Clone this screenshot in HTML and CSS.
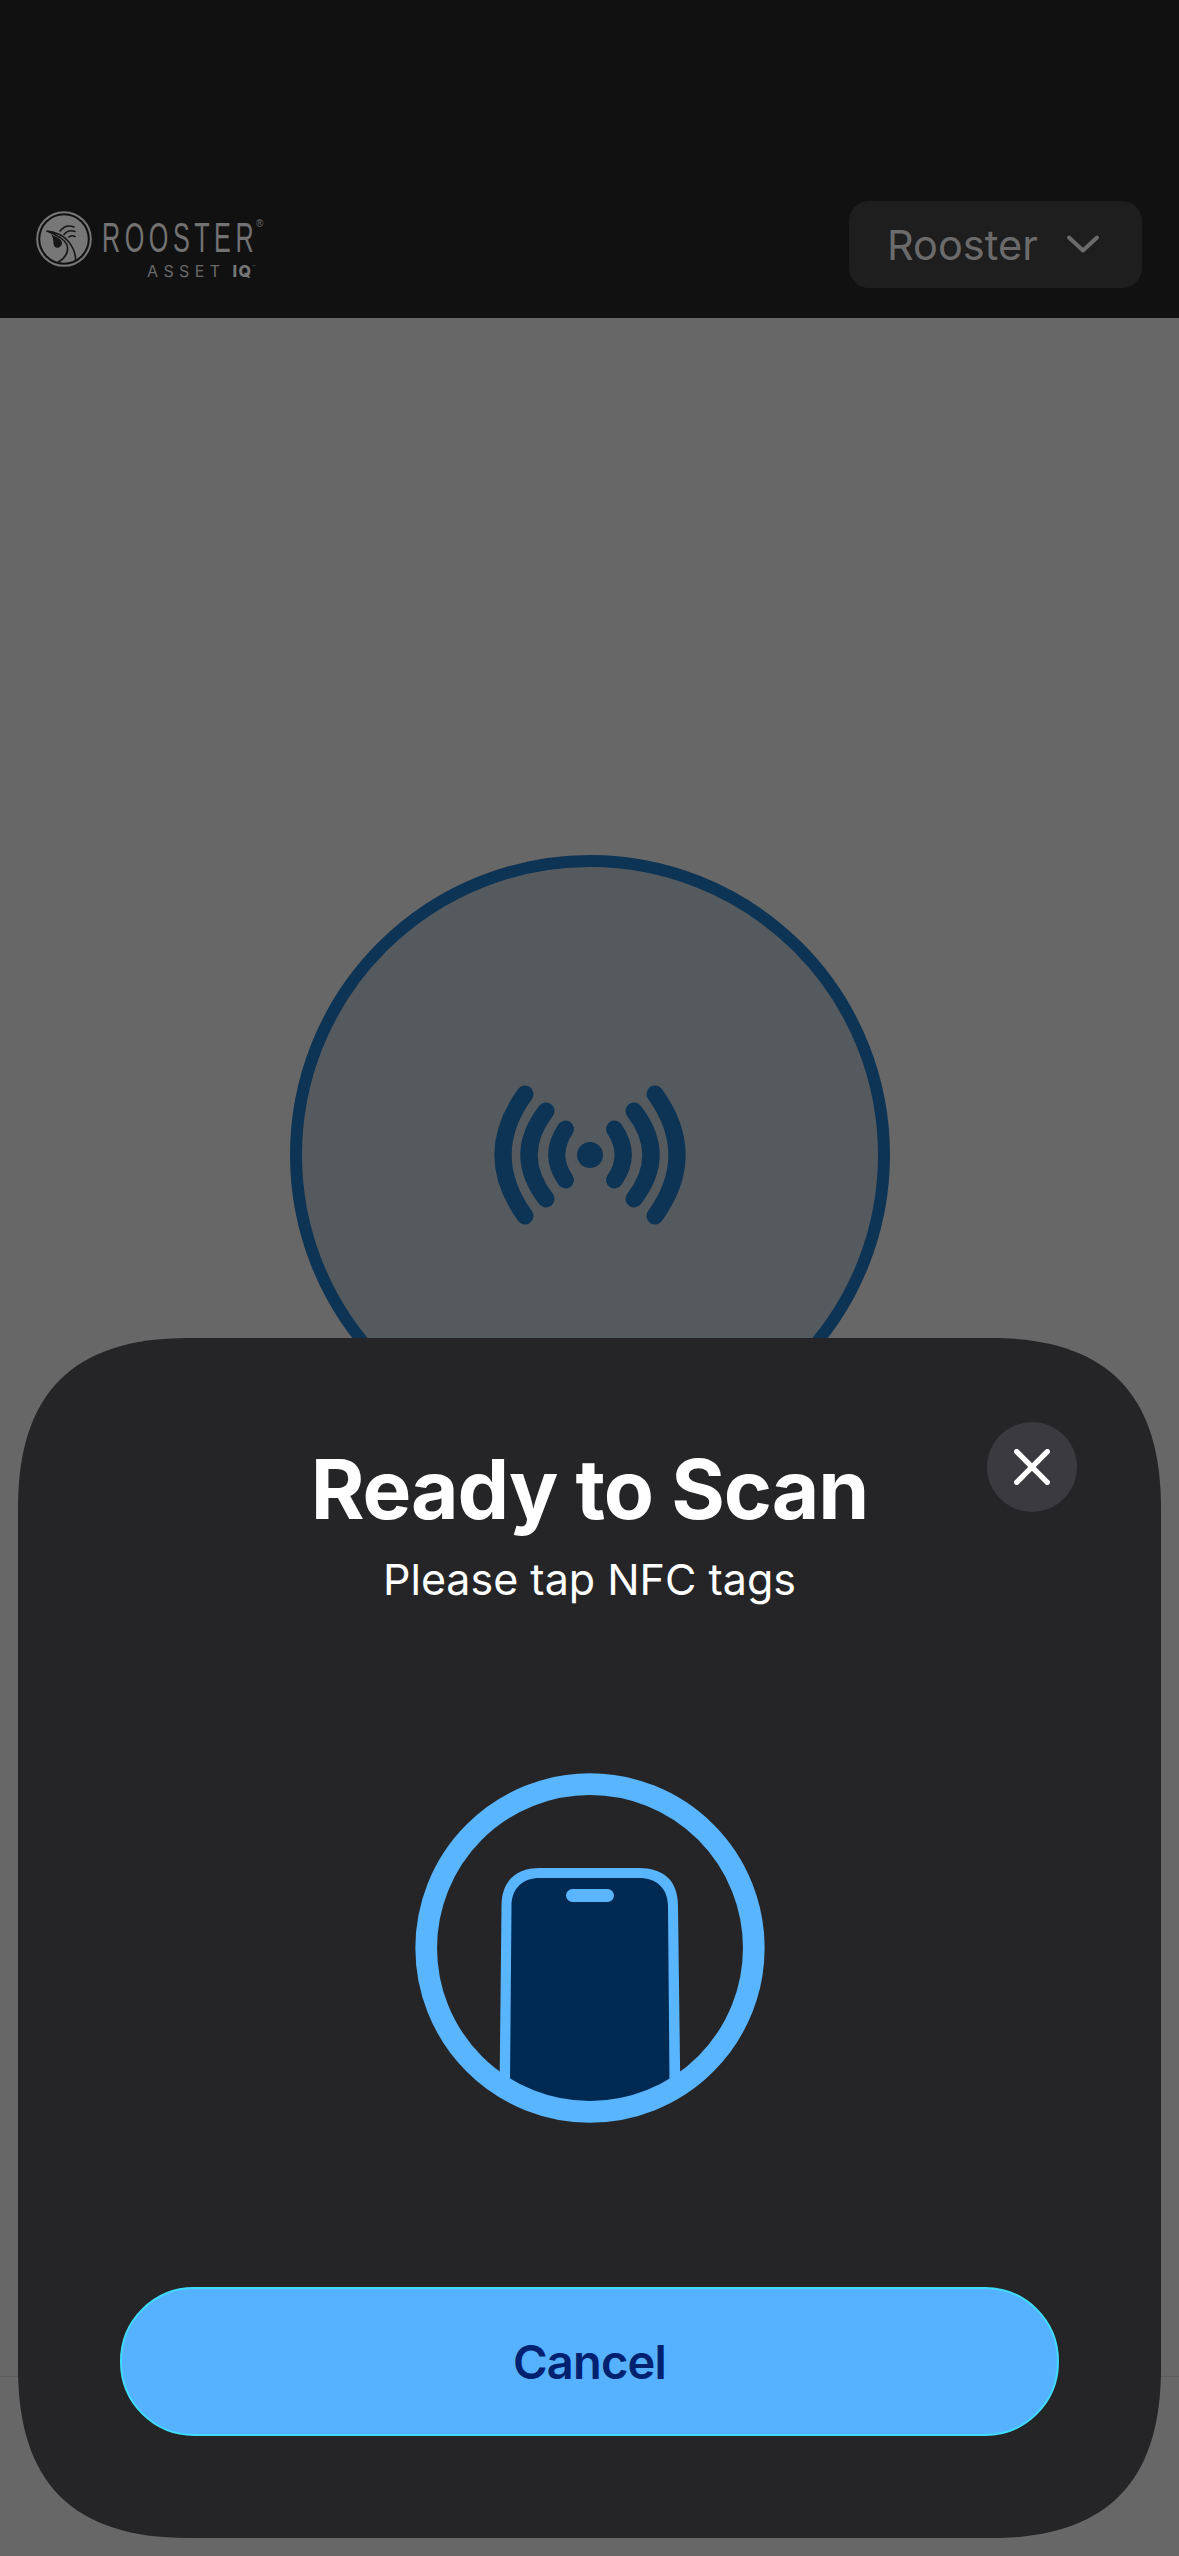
FILE: index.html
```html
<!DOCTYPE html>
<html lang="en">
<head>
<meta charset="utf-8">
<title>Ready to Scan</title>
<link rel="stylesheet" href="styles.css">
</head>
<body>
<div class="page">
  <header class="topbar">
    <div class="brand">
      <svg class="brand-mark" viewBox="0 0 58 58" aria-hidden="true">
        <circle class="mark-ring" cx="29" cy="29" r="26.800"/>
        <circle class="mark-disc" cx="29" cy="29" r="23.800"/>
        <path class="mark-bird" d="M12 21 C20 22 28 25 33 31 C38 37 41 43 40.500 51 M23.500 52 C30 48 34 42 32 35 C30 29 22 25 12 21"/>
        <path class="mark-drop" d="M16 24 C18 26 27 28 27 33 C27 37 22 39 20 37 C17 34 20 30 16 24 Z"/>
        <path class="mark-bird" d="M25 21 C29 16 34 15 39 17 M29 24.500 C32 21 36 20 40 21.500 M34 27 C36 25.500 38 25.500 40 26.500"/>
      </svg>
      <div class="brand-text">
        <div class="brand-line">
          <span class="brand-name">ROOSTER</span>
          <span class="brand-reg">®</span>
        </div>
        <div class="brand-sub">ASSET<b class="brand-iq">IQ</b><span class="brand-tm">™</span></div>
      </div>
    </div>
    <div class="picker">
      <span>Rooster</span>
      <svg class="picker-chevron" viewBox="0 0 34 20" aria-hidden="true"><path d="M3 3.500 L17 16.500 L31 3.500"/></svg>
    </div>
  </header>
  <main class="stage">
    <div class="nfc-disc">
      <svg class="nfc-waves" viewBox="0 0 200 160" aria-hidden="true">
        <ellipse class="wave-dot" cx="100" cy="80" rx="13" ry="13"/>
        <path class="wave" d="M75.500 54 Q58 80 75.500 105 M124.500 54 Q142 80 124.500 105"/>
        <path class="wave" d="M56 36 Q22 80 56 124 M144 36 Q178 80 144 124"/>
        <path class="wave" d="M35 19 Q-9 80 35 141 M165 19 Q209 80 165 141"/>
      </svg>
    </div>
  </main>
  <div class="foot"></div>
</div>
<section class="sheet">
  <button class="close" aria-label="Close">
    <svg viewBox="0 0 40 40" aria-hidden="true"><path d="M3 3 L37 37 M37 3 L3 37"/></svg>
  </button>
  <h1 class="title">Ready to Scan</h1>
  <p class="subtitle">Please tap NFC tags</p>
  <svg class="phone" viewBox="0 0 380 380" aria-hidden="true">
    <defs><clipPath id="ringclip"><circle cx="190" cy="187" r="160"/></clipPath></defs>
    <g clip-path="url(#ringclip)">
      <path class="phone-body" d="M99 380 L101.500 145 C101.500 118 118 107 140 107 H239 C262 107 278 118 278 145 L281 380 Z"/>
      <path class="phone-screen" d="M109.500 380 L111.500 145 C111.500 127 123 117 140 117 H239 C256 117 268 127 268 145 L270 380 Z"/>
      <rect class="phone-pill" x="166" y="128" width="48" height="13" rx="6.500"/>
    </g>
    <circle class="phone-ring" cx="190" cy="187" r="163.800"/>
  </svg>
  <button class="cancel">Cancel</button>
</section>
</body>
</html>
```
FILE: styles.css
```css
* { box-sizing: border-box; }
html, body { margin: 0; padding: 0; }
body { width: 1179px; height: 2556px; overflow: hidden; position: relative; background: #676767; font-family: Inter, "Noto Sans", sans-serif; }

.page { height: 2556px; display: flex; flex-direction: column; }

.topbar { height: 318px; flex: none; background: #111112; display: flex; justify-content: space-between; align-items: flex-start; padding: 201px 37px 0 35px; }
.brand { display: flex; align-items: flex-start; gap: 9px; color: #6e6e6e; }
.brand-mark { width: 58px; height: 58px; flex: none; margin-top: 9px; }
.mark-ring { fill: none; stroke: #777; stroke-width: 2; }
.mark-disc { fill: #777; }
.mark-bird { fill: none; stroke: #161616; stroke-width: 1.600; stroke-linecap: round; }
.mark-drop { fill: #161616; }
.brand-text { display: flex; flex-direction: column; margin-top: 16px; }
.brand-line { display: flex; align-items: flex-start; height: 42px; }
.brand-name { display: block; width: 154px; font-family: "Liberation Sans", sans-serif; font-size: 42px; line-height: 42px; letter-spacing: 7.500px; white-space: nowrap; color: #727272; transform: scaleX(0.6); transform-origin: left center; }
.brand-reg { font-family: "Liberation Sans", sans-serif; font-size: 10px; line-height: 12px; margin-top: 1px; color: #6e6e6e; }
.brand-sub { display: flex; align-items: flex-start; font-family: Inter, sans-serif; font-size: 16px; line-height: 18px; letter-spacing: 5.400px; margin: 3px 0 0 45px; color: #6a6a6a; }
.brand-iq { font-weight: 800; letter-spacing: 1.300px; color: #777; margin-left: 7px; }
.brand-tm { font-size: 5px; line-height: 10px; letter-spacing: 0; }

.picker { width: 293px; height: 87px; border-radius: 20px; background: #1e1e1f; color: #6b6b6b; font-size: 41.500px; line-height: 48px; display: flex; align-items: center; gap: 28px; padding-left: 38px; }
.picker-chevron { width: 34px; height: 20px; flex: none; margin-top: -1px; fill: none; stroke: #6b6b6b; stroke-width: 4; stroke-linecap: round; stroke-linejoin: round; }

.stage { flex: 1; display: flex; justify-content: center; align-items: flex-start; padding: 537px 0 0 1px; }
.nfc-disc { width: 600px; height: 600px; border: 12.500px solid #0d3455; border-radius: 50%; background: #555a5e; display: flex; align-items: center; justify-content: center; }
.nfc-waves { width: 200px; height: 160px; overflow: visible; }
.wave { fill: none; stroke: #0d3455; stroke-width: 17; stroke-linecap: round; }
.wave-dot { fill: #0d3455; }
.foot { height: 180px; flex: none; border-top: 1px solid #5c5c5c; }

.sheet { position: absolute; left: 18px; top: 1338px; width: 1143px; height: 1200px; background: #252527; display: flex; flex-direction: column; align-items: center; padding-top: 102px; clip-path: path("M0 170 C0 55 55 0 170 0 H973 C1088 0 1143 55 1143 170 V1030 C1143 1145 1088 1200 973 1200 H170 C55 1200 0 1145 0 1030 Z"); }
.close { position: absolute; left: 969px; top: 84px; width: 90px; height: 90px; border: 0; border-radius: 50%; background: #3a3a3f; display: flex; align-items: center; justify-content: center; padding: 0; }
.close svg { width: 36px; height: 36px; fill: none; stroke: #fff; stroke-width: 6; stroke-linecap: round; }
.title { margin: 0; font-size: 82px; line-height: 100px; font-weight: 700; color: #fff; letter-spacing: -1.100px; }
.subtitle { margin: 0; font-size: 43px; line-height: 52px; color: #fff; padding-top: 13px; }
.phone { width: 380px; height: 380px; flex: none; margin-top: 156px; display: block; }
.phone-body { fill: #5ab5ff; }
.phone-screen { fill: #012a52; }
.phone-pill { fill: #5ab5ff; }
.phone-ring { fill: none; stroke: #5ab5ff; stroke-width: 21.700; }
.cancel { width: 939px; height: 149px; flex: none; margin-top: 146px; border: 2px solid #3fdcff; border-radius: 74px; background: #56b2ff; color: #00216f; font-family: Inter, sans-serif; font-size: 47px; font-weight: 600; letter-spacing: -0.800px; padding: 0; }
```
